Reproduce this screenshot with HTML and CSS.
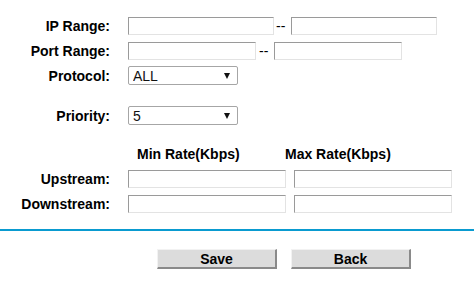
FILE: index.html
```html
<!DOCTYPE html>
<html>

<head>
  <meta charset="utf-8" />
  <meta name="viewport" content="width=device-width, initial-scale=1" />
  <title>Bandwidth Control Rule</title>
  <link rel="stylesheet" href="styles.css">
</head>

<body>
  <div class="form">
    <!-- address and port ranges -->
    <div class="row">
      <label class="label">IP Range:</label>
      <div class="field">
        <input class="txt ip" type="text">
        <span class="dash">--</span>
        <input class="txt ip" type="text">
      </div>
    </div>
    <div class="row">
      <label class="label">Port Range:</label>
      <div class="field">
        <input class="txt port" type="text">
        <span class="dash">--</span>
        <input class="txt port" type="text">
      </div>
    </div>
    <div class="row row-select">
      <label class="label">Protocol:</label>
      <div class="field">
        <div class="select-wrap">
          <select class="sel">
            <option>ALL</option>
            <option>TCP</option>
            <option>UDP</option>
          </select>
        </div>
      </div>
    </div>
    <div class="row row-priority">
      <label class="label">Priority:</label>
      <div class="field">
        <div class="select-wrap">
          <select class="sel">
            <option>5</option>
          </select>
        </div>
      </div>
    </div>

    <!-- rates -->
    <div class="row row-head">
      <span class="label"></span>
      <div class="field">
        <span class="head head-min">Min Rate(Kbps)</span>
        <span class="head head-max">Max Rate(Kbps)</span>
      </div>
    </div>
    <div class="row">
      <label class="label">Upstream:</label>
      <div class="field rates">
        <input class="txt rate" type="text">
        <input class="txt rate" type="text">
      </div>
    </div>
    <div class="row">
      <label class="label">Downstream:</label>
      <div class="field rates">
        <input class="txt rate" type="text">
        <input class="txt rate" type="text">
      </div>
    </div>
  </div>

  <hr class="divider">

  <div class="actions">
    <button class="btn">Save</button>
    <button class="btn">Back</button>
  </div>
</body>

</html>
```
FILE: styles.css
```css
body {
  margin: 0;
  background: white;
  color: #000;
  font-family: "Liberation Sans", Arial, Helvetica, sans-serif;
  font-size: 14px;
}

.form {
  display: flex;
  flex-direction: column;
  gap: 7px;
  padding-top: 17px;
}

.row {
  display: flex;
  align-items: center;
  height: 18px;
  line-height: 18px;
}

.row-select {
  height: 19px;
  margin-top: -1px;
}

.row-priority {
  height: 19px;
  margin-top: 14px;
}

.row-head {
  margin-top: 13px;
}

.label {
  width: 110px;
  flex: none;
  text-align: right;
  font-weight: bold;
  margin-right: 18px;
}

.field {
  display: flex;
  align-items: center;
}

.txt {
  box-sizing: border-box;
  height: 18px;
  margin: 0;
  padding: 0 3px;
  font-family: inherit;
  font-size: 13px;
  background: white;
  border-style: solid;
  border-width: 1px;
  border-color: #9a9a9a #e3e3e3 #e3e3e3 #9a9a9a;
}

.ip {
  width: 146px;
}

.port {
  width: 128px;
}

.dash {
  margin: 0 6px 0 2px;
}

.port + .dash {
  margin: 0 6px 0 3px;
}

.select-wrap {
  position: relative;
}

.sel {
  box-sizing: border-box;
  width: 110px;
  height: 19px;
  margin: 0;
  padding: 0 0 0 4px;
  font-family: inherit;
  font-size: 14px;
  color: #111;
  background: white;
  border: 1px solid #a6a6a6;
  border-radius: 2px;
  appearance: none;
  -webkit-appearance: none;
}

/* the little black arrow of the drop-down */
.select-wrap::after {
  content: "";
  position: absolute;
  right: 8px;
  top: 7px;
  border-left: 3px solid transparent;
  border-right: 3px solid transparent;
  border-top: 6px solid #111;
  pointer-events: none;
}

.head {
  font-weight: bold;
}

.head-min {
  margin-left: 9px;
  width: 148px;
}

.rates {
  gap: 8px;
}

.rate {
  width: 158px;
}

.divider {
  margin: 16px 0 0;
  height: 2px;
  border: none;
  background: #0a9bd0;
}

.actions {
  display: flex;
  gap: 14px;
  padding: 18px 0 0 157px;
}

.btn {
  box-sizing: border-box;
  width: 120px;
  height: 20px;
  padding: 0;
  font-family: inherit;
  font-size: 14px;
  font-weight: bold;
  color: #000;
  background: #dcdcdc;
  border-style: solid;
  border-width: 1px 2px 2px 1px;
  border-color: #f2f2f2 #8a8a8a #8a8a8a #f2f2f2;
  cursor: pointer;
}
```
